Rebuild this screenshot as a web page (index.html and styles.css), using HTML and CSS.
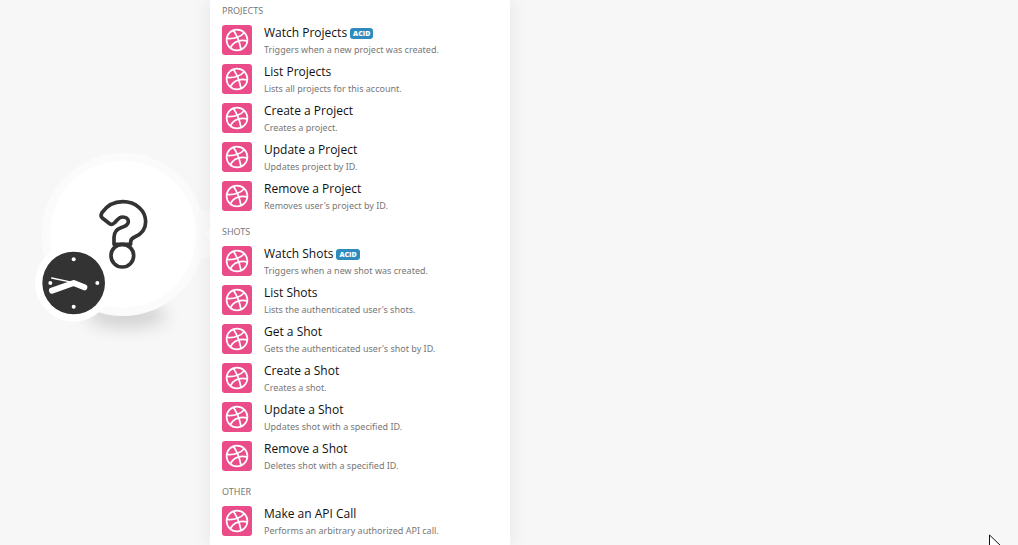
FILE: index.html
```
<!DOCTYPE html>
<html lang="en">
<head>
    <meta charset="UTF-8">
    <meta name="viewport" content="width=device-width, initial-scale=1.0">
    <title>Choose a module</title>
    <link rel="stylesheet" href="styles.css">
</head>
<body>
    <svg width="0" height="0" class="defs" aria-hidden="true">
        <symbol id="ball" viewBox="0 0 30 30">
            <g fill="none" stroke="#fff" stroke-width="1.7">
                <circle cx="15" cy="15" r="10.4"/>
                <path d="M11.5 5.5C15 10.500 17.500 16 19 24.500"/>
                <path d="M4.800 13.500C12 14 18.500 12 22.500 7.500"/>
                <path d="M8.300 22.800C11.500 16.500 17 14.300 25.300 15.800"/>
            </g>
        </symbol>
    </svg>

    <main class="canvas">
        <button class="node" aria-label="New module">
            <svg viewBox="0 0 600 600" aria-hidden="true">
                <defs>
                    <filter id="soft" x="-40%" y="-100%" width="180%" height="300%">
                        <feGaussianBlur stdDeviation="26"/>
                    </filter>
                </defs>
                <ellipse cx="320" cy="525" rx="120" ry="38" fill="#000" opacity=".15" filter="url(#soft)"/>
                <rect x="520" y="211" width="80" height="144" rx="28" fill="#fbfbfb"/>
                <circle cx="309" cy="283" r="245" fill="#fbfbfb"/>
                <circle cx="309" cy="283" r="220" fill="#fff"/>
                <path d="M552 281L572 261V301Z" fill="#fff"/>
                <g fill="none" stroke="#333" stroke-width="11" stroke-linejoin="round">
                    <path d="M270 252L247 234Q240 228 246 218C262 195 285 185 308 185C348 185 377 212 377 245C377 270 360 284 344 291Q332 296 332 306V313H282V292C282 275 290 268 306 262C318 257 325 254 325 245C325 236 318 231 308 231C296 231 292 240 284 248Q277 256 270 252Z"/>
                    <circle cx="307" cy="347" r="34"/>
                </g>
                <circle cx="161" cy="429" r="116" fill="#fff"/>
                <circle cx="161" cy="429" r="94" fill="#333"/>
                <g fill="#fff">
                    <circle cx="161" cy="358" r="6"/>
                    <circle cx="161" cy="500" r="6"/>
                    <circle cx="232" cy="429" r="6"/>
                    <circle cx="91" cy="429" r="6"/>
                </g>
                <g fill="none" stroke="#fff" stroke-linejoin="round" stroke-linecap="round">
                    <path d="M96 452L161 429L193 442" stroke-width="18"/>
                    <path d="M95 414L161 428" stroke-width="4"/>
                </g>
            </svg>
        </button>

        <nav class="panel" aria-label="Modules">
            <section class="group">
                <h2>PROJECTS</h2>
                <button class="item"><svg class="icon"><use href="#ball"/></svg><span class="text"><span class="name">Watch Projects<span class="badge">ACID</span></span><span class="desc">Triggers when a new project was created.</span></span></button>
                <button class="item"><svg class="icon"><use href="#ball"/></svg><span class="text"><span class="name">List Projects</span><span class="desc">Lists all projects for this account.</span></span></button>
                <button class="item"><svg class="icon"><use href="#ball"/></svg><span class="text"><span class="name">Create a Project</span><span class="desc">Creates a project.</span></span></button>
                <button class="item"><svg class="icon"><use href="#ball"/></svg><span class="text"><span class="name">Update a Project</span><span class="desc">Updates project by ID.</span></span></button>
                <button class="item"><svg class="icon"><use href="#ball"/></svg><span class="text"><span class="name">Remove a Project</span><span class="desc">Removes user's project by ID.</span></span></button>
            </section>
            <section class="group">
                <h2>SHOTS</h2>
                <button class="item"><svg class="icon"><use href="#ball"/></svg><span class="text"><span class="name">Watch Shots<span class="badge">ACID</span></span><span class="desc">Triggers when a new shot was created.</span></span></button>
                <button class="item"><svg class="icon"><use href="#ball"/></svg><span class="text"><span class="name">List Shots</span><span class="desc">Lists the authenticated user's shots.</span></span></button>
                <button class="item"><svg class="icon"><use href="#ball"/></svg><span class="text"><span class="name">Get a Shot</span><span class="desc">Gets the authenticated user's shot by ID.</span></span></button>
                <button class="item"><svg class="icon"><use href="#ball"/></svg><span class="text"><span class="name">Create a Shot</span><span class="desc">Creates a shot.</span></span></button>
                <button class="item"><svg class="icon"><use href="#ball"/></svg><span class="text"><span class="name">Update a Shot</span><span class="desc">Updates shot with a specified ID.</span></span></button>
                <button class="item"><svg class="icon"><use href="#ball"/></svg><span class="text"><span class="name">Remove a Shot</span><span class="desc">Deletes shot with a specified ID.</span></span></button>
            </section>
            <section class="group">
                <h2>OTHER</h2>
                <button class="item"><svg class="icon"><use href="#ball"/></svg><span class="text"><span class="name">Make an API Call</span><span class="desc">Performs an arbitrary authorized API call.</span></span></button>
            </section>
        </nav>

        <svg class="cursor" viewBox="0 0 14 20" aria-hidden="true">
            <path d="M1.5 1V17L5.5 13L8 19L10.5 18L8 12H13Z" fill="#fff" stroke="#111" stroke-width="1"/>
        </svg>
    </main>
</body>
</html>
```
FILE: styles.css
```
* {
    box-sizing: border-box;
}
body {
    margin: 0;
    background-color: #f7f7f7;
    font-family: "Noto Sans", "Open Sans", sans-serif;
}
.defs {
    position: absolute;
}
button {
    border: none;
    background: none;
    padding: 0;
    font-family: inherit;
    cursor: pointer;
}
.canvas {
    position: relative;
    height: 100vh;
    overflow: hidden;
    padding-left: 210px;
}
/* the node sits freely on the canvas, under the panel */
.node {
    position: absolute;
    left: 20px;
    top: 140px;
    width: 200px;
    height: 200px;
}
.node svg {
    display: block;
    overflow: visible;
}
.panel {
    position: relative;
    max-width: 300px;
    min-height: 100%;
    padding: 2px 12px 0;
    background-color: #fff;
    box-shadow: 0 0 20px rgba(0, 0, 0, 0.08);
}
.group {
    margin-bottom: 8px;
}
.group h2 {
    margin: 0;
    height: 18px;
    font-size: 9px;
    line-height: 17px;
    font-weight: 400;
    color: #777;
}
.item {
    display: flex;
    gap: 12px;
    width: 100%;
    height: 39px;
    padding-top: 5px;
    text-align: left;
}
.icon {
    flex: none;
    width: 30px;
    height: 30px;
    border-radius: 3px;
    background-color: #ea4c89;
}
.text {
    display: flex;
    flex-direction: column;
}
.name {
    display: flex;
    align-items: center;
    gap: 3px;
    font-family: "Open Sans", "Noto Sans", sans-serif;
    font-size: 12px;
    line-height: 16px;
    color: #111;
}
.badge {
    padding: 0 3px;
    border-radius: 3px;
    background-color: #2e8bbd;
    color: #fff;
    font-size: 7px;
    line-height: 11px;
    font-weight: 800;
}
.desc {
    font-size: 9px;
    line-height: 17px;
    color: #777;
}
.cursor {
    position: absolute;
    left: 988px;
    top: 534px;
    width: 14px;
    height: 20px;
}
```
